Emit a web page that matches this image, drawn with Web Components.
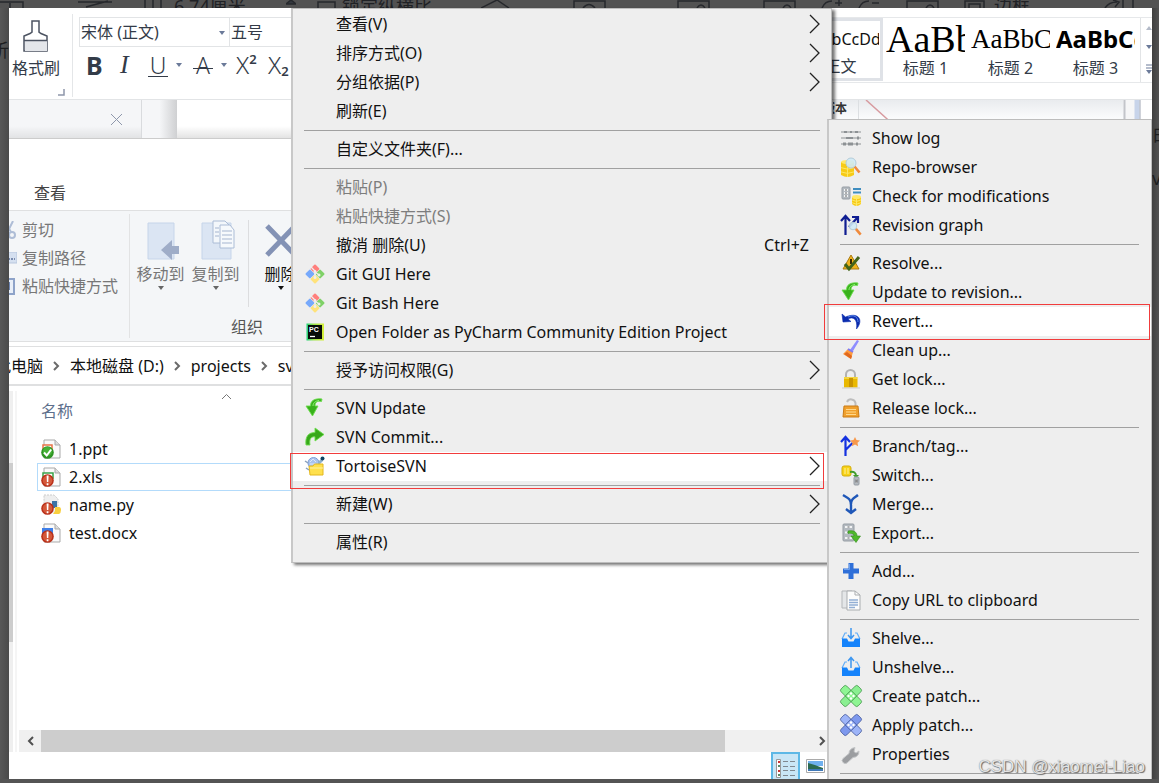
<!DOCTYPE html>
<html lang="zh-CN">
<head>
<meta charset="utf-8">
<title>TortoiseSVN</title>
<style>
html,body{margin:0;height:100%}
body{background:#545454;overflow:hidden;font:16px/20px "Noto Sans","Noto Sans CJK SC",sans-serif;color:#111}
</style>
</head>
<body>
<app-desktop>
  <dim-toolbar slot="top"></dim-toolbar>
  <dim-edge slot="left"><span>析</span></dim-edge>
  <dim-edge slot="right" side="right"><span>白</span><span>ve</span></dim-edge>
  <word-ribbon></word-ribbon>
  <doc-strip></doc-strip>
  <file-explorer>
    <file-row icon="ppt">1.ppt</file-row>
    <file-row icon="xls" selected>2.xls</file-row>
    <file-row icon="py">name.py</file-row>
    <file-row icon="docx">test.docx</file-row>
  </file-explorer>
  <context-menu slot="overlay" class="shell">
    <menu-entry submenu>查看(V)</menu-entry>
    <menu-entry submenu>排序方式(O)</menu-entry>
    <menu-entry submenu>分组依据(P)</menu-entry>
    <menu-entry>刷新(E)</menu-entry>
    <menu-line></menu-line>
    <menu-entry>自定义文件夹(F)...</menu-entry>
    <menu-line></menu-line>
    <menu-entry disabled>粘贴(P)</menu-entry>
    <menu-entry disabled>粘贴快捷方式(S)</menu-entry>
    <menu-entry shortcut="Ctrl+Z">撤消 删除(U)</menu-entry>
    <menu-entry icon="git">Git GUI Here</menu-entry>
    <menu-entry icon="git">Git Bash Here</menu-entry>
    <menu-entry icon="pycharm">Open Folder as PyCharm Community Edition Project</menu-entry>
    <menu-line></menu-line>
    <menu-entry submenu>授予访问权限(G)</menu-entry>
    <menu-line></menu-line>
    <menu-entry icon="update">SVN Update</menu-entry>
    <menu-entry icon="commit">SVN Commit...</menu-entry>
    <menu-entry icon="tortoise" submenu active>TortoiseSVN</menu-entry>
    <menu-line></menu-line>
    <menu-entry submenu>新建(W)</menu-entry>
    <menu-line></menu-line>
    <menu-entry>属性(R)</menu-entry>
  </context-menu>
  <context-menu slot="overlay" class="svn">
    <menu-entry icon="log">Show log</menu-entry>
    <menu-entry icon="repo">Repo-browser</menu-entry>
    <menu-entry icon="check">Check for modifications</menu-entry>
    <menu-entry icon="graph">Revision graph</menu-entry>
    <menu-line></menu-line>
    <menu-entry icon="resolve">Resolve...</menu-entry>
    <menu-entry icon="update">Update to revision...</menu-entry>
    <menu-entry icon="revert" active>Revert...</menu-entry>
    <menu-entry icon="clean">Clean up...</menu-entry>
    <menu-entry icon="lock">Get lock...</menu-entry>
    <menu-entry icon="unlock">Release lock...</menu-entry>
    <menu-line></menu-line>
    <menu-entry icon="branch">Branch/tag...</menu-entry>
    <menu-entry icon="switch">Switch...</menu-entry>
    <menu-entry icon="merge">Merge...</menu-entry>
    <menu-entry icon="export">Export...</menu-entry>
    <menu-line></menu-line>
    <menu-entry icon="add">Add...</menu-entry>
    <menu-entry icon="copy">Copy URL to clipboard</menu-entry>
    <menu-line></menu-line>
    <menu-entry icon="shelve">Shelve...</menu-entry>
    <menu-entry icon="unshelve">Unshelve...</menu-entry>
    <menu-entry icon="patchg">Create patch...</menu-entry>
    <menu-entry icon="patchb">Apply patch...</menu-entry>
    <menu-entry icon="wrench">Properties</menu-entry>
    <menu-line></menu-line>
  </context-menu>
  <water-mark slot="overlay">CSDN @xiaomei-Liao</water-mark>
</app-desktop>

<script>
const patch = (a, b, s) => `<g stroke="${s}" stroke-width=".8"><rect x="6" y="-2" width="8" height="24" rx="2" fill="${a}" transform="rotate(-45 10 10)"/><rect x="6" y="-2" width="8" height="24" rx="2" fill="${b}" fill-opacity=".7" transform="rotate(45 10 10)"/><rect x="6" y="6" width="8" height="8" fill="${a}" transform="rotate(45 10 10)"/></g><g fill="#fff"><circle cx="10" cy="7.500" r="1.200"/><circle cx="10" cy="12.500" r="1.200"/><circle cx="7.500" cy="10" r="1.200"/><circle cx="12.500" cy="10" r="1.200"/></g>`;
const page = inner => `<path d="M3 1h11l5 5v13H3z" fill="#fafafa" stroke="#a9a9a9"/><path d="M14 1v5h5" fill="#ddd" stroke="#a9a9a9"/>${inner}`;
const alertBadge = `<circle cx="6.500" cy="13.500" r="6.300" fill="#b92f18"/><circle cx="6.500" cy="13.500" r="4.800" fill="#d4583a"/><path d="M5.600 8.600h2l-.3 6.400H5.900zM5.700 16.300h1.700v2H5.700z" fill="#fff"/>`;
const disk = (x, y, w, h) => `<path d="M${x} ${y+2}v${h-4}q${w/2} 4 ${w} 0v-${h-4}z" fill="#f7cb16"/><ellipse cx="${x+w/2}" cy="${y+2}" rx="${w/2}" ry="2" fill="#ffe866"/><path d="M${x} ${y+h*.45}q${w/2} 3 ${w} 0M${x} ${y+h*.7}q${w/2} 3 ${w} 0M${x+w*.5} ${y+4}v${h-4}" stroke="#fde766" fill="none"/>`;
const lens = (x, y, r) => `<path d="M${x+r*.7} ${y+r*.7}l5 6" stroke="#f08a3c" stroke-width="2.600"/><circle cx="${x}" cy="${y}" r="${r}" fill="#cfeaf6" fill-opacity=".9" stroke="#b4ccd8"/>`;
const cabinet = (x, y, w, h) => `<rect x="${x}" y="${y}" width="${w}" height="${h}" rx="1" fill="#b4bac0" stroke="#969da4"/><path d="M${x+2} ${y+3}h${w-4}M${x+2} ${y+h/2}h${w-4}M${x+2} ${y+h-3}h${w-4}" stroke="#f2f4f5" stroke-width="2"/><path d="M${x+w/2-1} ${y+3}h2M${x+w/2-1} ${y+h/2}h2M${x+w/2-1} ${y+h-3}h2" stroke="#666"/>`;
const downArrow = `<path d="M17 1C9 0 5.500 3 5.500 8H1l6.500 10L13 8h-3c0-3.500 2-5.500 6.500-4.500z" fill="#38b11b" stroke="#6bdc4c" stroke-width=".9"/><path d="M8 8c0-3 2-5 6-5.500" stroke="#8df070" fill="none"/>`;
const tray = `<path d="M1 11l3-6h2M19 11l-3-6h-2" stroke="#63aef8" fill="none" stroke-width="1.200"/><path d="M1 10.500h5l1.500 3h5l1.500-3h5V19H1z" fill="#1583fb"/>`;
const ICONS = {
  git:`<g transform="rotate(45 10 10)"><rect x="3" y="3" width="6.800" height="6.800" rx="1" fill="#ff7f7c"/><rect x="10.200" y="3" width="6.800" height="6.800" rx="1" fill="#7fd167"/><rect x="3" y="10.200" width="6.800" height="6.800" rx="1" fill="#77a9fb"/><rect x="10.200" y="10.200" width="6.800" height="6.800" rx="1" fill="#ffe27a"/></g><path d="M6 3l4 4v7M10 8l4 3" stroke="#eee" stroke-width="1.300" fill="none"/><circle cx="10" cy="7.500" r="1.500" fill="#eee"/><circle cx="10" cy="13.500" r="1.500" fill="#eee"/><circle cx="14" cy="11" r="1.500" fill="#eee"/>`,
  pycharm:`<defs><linearGradient id="p"><stop stop-color="#1fd17c"/><stop offset=".4" stop-color="#9be04a"/><stop offset="1" stop-color="#d8f03c"/></linearGradient></defs><rect x="1.500" y="1.500" width="17.500" height="17" fill="url(#p)"/><rect x="3" y="3" width="14" height="14" fill="#070b08"/><text x="4" y="9.500" font-family="Liberation Sans" font-weight="700" font-size="7" fill="#fff">PC</text><path d="M5 14.500h5" stroke="#fff" stroke-width="1.300"/>`,
  update:downArrow,
  commit:`<path d="M1 18C0 10 3 5.500 10 5.500V1l9 6.500-9 6.500v-4.200C6 9.500 4 12 5 18z" fill="#38a81b" stroke="#6bdc4c" stroke-width=".9"/>`,
  tortoise:`<circle cx="8.500" cy="7" r="5.500" fill="#a9c3ef" stroke="#7f9fd6"/><path d="M5 6l3-3 3 3M5 8h6" stroke="#dbe7fb" fill="none"/><path d="M13 6l4-4 1 3-4 4z" fill="#8fb2cc"/><circle cx="17.500" cy="2.500" r="2" fill="#0f4361"/><path d="M0 5l3 2M1 12l3 2" stroke="#8aa0bc" stroke-width="1.500"/><path d="M4 10h4l1.500-2h8.500v11H5z" fill="#ffe04d" stroke="#e3b81f"/><path d="M5 12h13" stroke="#fff2a6"/>`,
  log:`<g fill="#8d9194"><path d="M0 3.500h20v1H0zM0 9.500h20v1H0zM0 15.500h20v1H0z"/><rect x="3" y="3" width="3" height="2"/><rect x="9" y="3" width="2" height="2"/><rect x="14" y="3" width="3" height="2"/><rect x="5" y="9" width="7" height="2"/><rect x="16" y="8.500" width="2" height="3"/><rect x="2" y="14.500" width="3" height="3"/><rect x="7" y="14.500" width="5" height="3"/><rect x="15" y="14.500" width="2" height="3"/></g>`,
  repo:disk(0,3,13,17)+lens(10,6,5),
  check:cabinet(1,1,8,12)+`<path d="M12 3h8M12 6.500h8" stroke="#3f8dbf" stroke-width="2"/>`+disk(11,9,9,11),
  graph:`<path d="M4.500 20V2M0 6l4.500-5L9 6M8 12L16 3M11 2h6v6" stroke="#0f1d92" stroke-width="2.200" fill="none"/>`+lens(12,11,3.800),
  resolve:`<path d="M10 2l8 14H2z" fill="#f0b31c" stroke="#a97a13"/><path d="M10 6v5" stroke="#3a2a05" stroke-width="2"/><path d="M4 11l4 5 10-12" stroke="#42641a" stroke-width="3" fill="none"/>`,
  revert:`<path d="M1 3l1 8 8-.5-3-2.500C12 5 17 8 15.500 18c7.500-9 2-17.500-11-12z" fill="#0a2cae" stroke="#0a2cae" stroke-width=".6"/><path d="M7 6c6-3 10 0 10 5" stroke="#5c8df0" fill="none"/>`,
  clean:`<path d="M16 0l2 1-6 10-3-1z" fill="#8f8dff"/><path d="M7 9l5 3-2 7-8-5z" fill="#ff9a3c"/><path d="M3 14l7 5 1-3-5-4z" fill="#e0681f"/><path d="M7 9l5 3" stroke="#7d7af5" stroke-width="2"/>`,
  lock:`<path d="M5 9V5.500a4.500 4.500 0 0 1 9 0V9" fill="none" stroke="#b2b2b2" stroke-width="2"/><rect x="3" y="8" width="13.500" height="10.500" fill="#e9b800"/><path d="M3 9h13.500" stroke="#fff07a"/><path d="M8 9h4v9H8z" fill="#c99400"/><path d="M1 19h18" stroke="#ccc"/>`,
  unlock:`<path d="M6 4a4.500 4.500 0 0 1 8.500 1V9" fill="none" stroke="#bdbdbd" stroke-width="2"/><path d="M3 8h14l1 11H2z" fill="#f0a02c" stroke="#c97b16"/><path d="M5 11.500h10M5 14h10M5 16.500h10" stroke="#ffd98c" stroke-width="1.200"/>`,
  branch:`<path d="M4.500 20V2M0 6l4.500-5L9 6M4.500 14l7-7" stroke="#1431e0" stroke-width="2.200" fill="none"/><path d="M14 1l1.500 3 3.500.5-2.500 2.300.6 3.500L14 8.600l-3.100 1.700.6-3.500L9 4.500l3.500-.5z" fill="#f7984a"/>`,
  switch:`<rect x="1" y="1" width="9" height="10" rx="2" fill="#f8d216" stroke="#d3ad0d"/><path d="M4 3v6M7 3v6" stroke="#fff29a"/><path d="M9 7q6-1 6 4" stroke="#3f9c2a" stroke-width="2" fill="none"/><path d="M12 10h6l-3 3.500z" fill="#3f9c2a"/>`+cabinet(13,12,5,8),
  merge:`<path d="M2 1c5 3 8 4 8 10V18M17 1c-4 3-7 4-7 9M5 15l5 4 5-4" stroke="#1f57b8" stroke-width="2.400" fill="none"/>`,
  export:cabinet(2,1,11,17)+`<path d="M7 8c6-1 9 1 9 5h3.500L15 19.500 10 13h3c0-2-2-3-6-2.500z" fill="#4fb82c" stroke="#2f8a17" stroke-width=".6"/>`,
  add:`<path d="M7.500 2h5v5.500H18v5h-5.500V18h-5v-5.500H2v-5h5.500z" fill="#2f6fd8"/><path d="M8.500 3v5.500H3" stroke="#6ea2ef" fill="none"/>`,
  copy:`<path d="M1 1h10v17H1z" fill="#e4e6e8" stroke="#b4b7ba"/><path d="M6 1h8l5 4v15H6z" fill="#fcfcfc" stroke="#aaadb0"/><path d="M14 1v4h5" fill="none" stroke="#aaadb0"/><path d="M8 10h9M8 12.500h9M8 15h9M8 17.500h6" stroke="#92aed4" stroke-width="1.400"/>`,
  shelve:tray+`<path d="M10 0v10M7 7l3 3.500L13 7" stroke="#3e97f0" fill="none" stroke-width="1.500"/>`,
  unshelve:tray+`<path d="M10 11V1M7 4l3-3.500L13 4" stroke="#3e97f0" fill="none" stroke-width="1.500"/>`,
  patchg:patch('#8ef593','#5ff06a','#4a9a52'),
  patchb:patch('#9db4f8','#4d74ec','#4a5f9e'),
  wrench:`<path d="M2 18.500q-2-2 0-4l6-5q0-5 6-6l-1 4 2 1.500 3-2q0 6-6 6.500l-6 5.500q-2 1.500-4-.5z" fill="#9b9da0" stroke="#c4c6c8"/>`,
  ppt:page('<path d="M2 6h9v5H2z" fill="#fff" stroke="#e87346" stroke-width="1.500"/>')+`<circle cx="6.500" cy="13.500" r="6.300" fill="#2f9423"/><circle cx="6.500" cy="12.500" r="4.600" fill="#46b236"/><path d="M3 13.500l2.700 3 4.500-6" stroke="#fff" stroke-width="2" fill="none"/>`,
  xls:page('<path d="M2 6h10v5H2z" fill="#fff" stroke="#3aa34a" stroke-width="1.500"/>')+alertBadge,
  py:`<path d="M3 0h10l4 4v13H3z" fill="#eee" stroke="#ccc" stroke-dasharray="2 1"/><path d="M11 6h5v7h-5z" fill="#3a73a6"/><path d="M14 12h4q2 0 2 3t-2 4h-6l2-3z" fill="#f9cf3e"/>`+alertBadge,
  docx:page('<path d="M1 5h11v6H1z" fill="#3f7fe8"/>')+alertBadge
};
const svg = n => n && ICONS[n] ? `<svg viewBox="0 0 20 20" width="20" height="20" aria-hidden="true">${ICONS[n]}</svg>` : '';
const CARET = c => `<svg width="6" height="4" aria-hidden="true"><path d="M0 0h6L3 4z" fill="${c}"/></svg>`;

function element(name, render) {
  customElements.define(name, class extends HTMLElement {
    constructor() { super(); this.attachShadow({mode:'open'}); }
    connectedCallback() { this.shadowRoot.innerHTML = render(this); }
  });
}

element('app-desktop', () => `<style>
:host{display:grid;grid-template:8px 1fr 4px / 9px 1fr 7px;height:100vh;position:relative;overflow:hidden;background:#545454}
slot[name=top]::slotted(*){grid-area:1/1/2/4}
slot[name=left]::slotted(*){grid-area:2/1}
slot[name=right]::slotted(*){grid-area:2/3}
main{grid-area:2/2;display:flex;flex-direction:column;background:#fff;min-height:0;min-width:0;overflow:hidden}
slot[name=overlay]::slotted(*){position:absolute}
</style><slot name="top"></slot><slot name="left"></slot><main><slot></slot></main><slot name="right"></slot><slot name="overlay"></slot>`);

const glyph = (w, d) => `<svg width="${w}" height="8" fill="none" stroke="#26282c" stroke-width="1.500">${d}</svg>`;
const PICTURE = glyph(33, '<path d="M1 8V1h31v7M20 8q4-6 8 0"/>');
element('dim-toolbar', () => `<style>
:host{display:flex;height:8px;overflow:hidden;background:#525252;color:#1f2125}
div{display:flex}
svg{flex:none;display:block}
span{height:8px;font-size:18px;line-height:12px;white-space:nowrap}
.shape{gap:32px;width:174px}.shape svg:nth-child(2){margin-left:22px}
.size{gap:40px;width:143px}
.lock{gap:5px;width:164px}
.pics{width:483px;display:grid;grid-template-columns:92px 104px 86px 58px 37px 48px 58px}
.frame{gap:9px;flex:1}.frame svg:last-child{margin-left:64px}
</style>
<div class="shape">${glyph(24,'<path d="M0 2h23v6M10 3v5"/>')}${glyph(34,'<path d="M0 2h34M8 7L30 1"/>')}${glyph(20,'<path d="M1 0v8M9 0v8M17 0v8"/>')}</div>
<div class="size"><span>6.74厘米</span>${glyph(10,'<path d="M0 4L5 0l5 4z" fill="#34383f"/>')}</div>
<div class="lock">${glyph(20,'<path d="M1 8V2h17v6"/>')}<span>锁定纵横比</span></div>
<div class="pics">${glyph(32,'<path d="M0 8L16 0l12 8"/>')}${glyph(33,'<path d="M1 8V1h31v7M10 8q6-7 12 0"/>')}${PICTURE}${PICTURE}${glyph(22,'<path d="M1 8q3-7 10-7M14 3h7M18 0v6"/>')}${glyph(22,'<path d="M1 8q3-7 10-7M14 3h7"/>')}${PICTURE}</div>
<div class="frame">${glyph(21,'<path d="M1 8V1h19v7M5 8V4h11v4"/>')}<span>边框</span>${glyph(50,'<path d="M2 8Q6 2 14 2M10 0l6 2-4 5M20 0v8M30 0v8"/>')}</div>`);

element('dim-edge', el => `<style>
:host{display:flex;flex-direction:column;align-items:flex-end;min-width:0;min-height:0;overflow:hidden;color:#1d1e20;font-size:18px;gap:24px;
background:linear-gradient(90deg,#585858,#4a4a4a);padding-top:32px}
:host([side]){align-items:flex-start;background:linear-gradient(90deg,#404040,#525252);padding-top:116px}
::slotted(span){line-height:20px;white-space:nowrap}
</style><slot></slot>`);

element('word-ribbon', () => `<style>
:host{display:flex;flex:none;height:92px;background:#fff;border-bottom:1px solid #e2e4e6;box-sizing:border-box;overflow:hidden;color:#333b48}
button{font:inherit;color:inherit;background:none;border:0;padding:0;margin:0}
.paint{flex:none;width:63px;margin:6px 0 2px;border-right:1px solid #e4e6e8;display:flex;flex-direction:column;align-items:center}
.paint button{display:flex;flex-direction:column;align-items:center;gap:3px;padding:6px 9px 0 0;line-height:24px}
.paint .corner{align-self:flex-end;margin:9px 7px 0}
.font{flex:none;width:300px;padding:9px 0 0 6px}
.boxes{display:flex;border:1px solid #e2e4e6;height:28px}
select{appearance:none;border:0;border-right:1px solid #e2e4e6;background:none;font:inherit;color:inherit;padding:0 1px;width:150px;outline:0}
.sel{position:relative;display:flex}.sel svg{position:absolute;right:5px;top:13px}
.marks{display:flex;align-items:center;height:36px;padding-left:7px;line-height:26px}
.marks button{height:26px;text-align:left;display:flex;align-items:center}
.marks svg{margin-left:8px}
.marks .b{width:34px;font:700 25px/26px "Noto Sans"}
.marks .i{width:28px;font:italic 26px/26px "Liberation Serif"}
.u{width:45px}.u span,.s span{font:300 23px/22px "Noto Sans";width:20px;text-align:center;border-bottom:1px solid;display:block}
.s{width:43px}.s span{border:0;background:linear-gradient(#333b48,#333b48) 0 14px/20px 1px no-repeat}
.marks .x{width:32px;font-size:24px;font-weight:300}.x small{font-size:13px;line-height:14px;font-weight:600}
.x .sup{align-self:flex-start}.x .sub{align-self:flex-end}
.gallery{flex:none;margin:9px 0 16px auto;display:flex;border:solid #e6e8ea;border-width:1px 0}
.style{width:85px;box-sizing:border-box;display:flex;flex-direction:column;align-items:center;overflow:hidden;padding:0 3px}
.style b{font-weight:400;height:38px;white-space:nowrap;color:#000;display:block;overflow:hidden;width:100%}
.style span{line-height:24px}
.style:first-child{border:3px solid #dfe2e7;height:63px;padding:0 1px}.style:first-child b{font-size:16px;height:35px;line-height:36px;color:#111}
.h1 b{font:38px/42px "Liberation Serif"}.h2 b{font:27px/42px "Liberation Serif"}.h3 b{font:700 24px/42px "Noto Sans"}
.scroll{width:12px;box-sizing:border-box;border-left:1px solid #e2e4e6;margin-left:2px;display:flex;flex-direction:column;justify-content:space-around;align-items:flex-end}
</style>
<div class="paint"><button><svg width="26" height="33" fill="none" stroke="#4c5361" stroke-width="1.500"><path d="M9 1h7v11l2 1.500 6 2.500v15H1V16l6-2.500L9 12z"/><path d="M2 21h22v10H2z" fill="#e4e6ea" stroke="none"/><path d="M1 20.500h23"/></svg>格式刷</button><svg class="corner" width="7" height="7"><path d="M6 0v6H0" fill="none" stroke="#8e97ab" stroke-width="1.500"/></svg></div>
<div class="font"><div class="boxes"><label class="sel"><select aria-label="字体"><option>宋体 (正文)</option></select>${CARET('#6b7a99')}</label><select aria-label="字号"><option>五号</option></select></div>
<div class="marks"><button class="b">B</button><button class="i">I</button><button class="u"><span>U</span>${CARET('#6b7a99')}</button><button class="s"><span>A</span>${CARET('#6b7a99')}</button><button class="x">X<small class="sup">2</small></button><button class="x">X<small class="sub">2</small></button></div></div>
<div class="gallery"><div class="style"><b>AaBbCcDd</b><span>正文</span></div><div class="style h1"><b>AaBb</b><span>标题 1</span></div><div class="style h2"><b>AaBbC</b><span>标题 2</span></div><div class="style h3"><b>AaBbCc</b><span>标题 3</span></div>
<div class="scroll"><svg width="6" height="4"><path d="M0 4h6L3 0z" fill="#b3bac8"/></svg>${CARET('#6b7a99')}<svg width="6" height="10"><path d="M0 1h6M0 4h6" stroke="#6b7a99"/><path d="M0 6h6L3 10z" fill="#6b7a99"/></svg></div></div>`);

element('doc-strip', () => `<style>
:host{display:flex;flex:none;height:38px;background:linear-gradient(transparent 26px,#0000001c),#fff;overflow:hidden}
.tab{width:133px;box-sizing:border-box;background:linear-gradient(transparent 26px,#00000014),#f5f6f8;border-right:1px solid #d9dbde;display:flex;align-items:center;justify-content:flex-end;padding-right:18px}
.gut{width:35px;background:linear-gradient(90deg,#f5f6f8 50%,#cfd0d2)}
.cell{margin-left:auto;width:319px;display:flex;background:linear-gradient(#e9ebee,#fafbfc 18px);font:700 12px/16px "Noto Sans CJK SC";color:#333;justify-content:space-between;overflow:hidden}
.cell span{margin-left:-10px}
</style><div class="tab"><svg width="13" height="13"><path d="M1 1l11 11M12 1L1 12" stroke="#8e97ab"/></svg></div><div class="gut"></div>
<div class="cell"><span>版本</span><svg width="294" height="38"><path d="M.5 0v38" stroke="#dcdfe2"/><path d="M8 0l30 27" stroke="#d79a9f" stroke-width="1.500"/><path d="M265 0h29v38h-29z" fill="#f6f6f7"/><path d="M266.500 0v38" stroke="#c3c5ca" stroke-width="2"/><path d="M279 0v38" stroke="#c8d4ea" stroke-width="5"/><path d="M282 0v38" stroke="#a8aebb"/><path d="M283 0h11v38h-11z" fill="#fff"/></svg></div>`);

element('file-row', el => `<style>
:host{display:flex;align-items:center;gap:8px;height:28px;box-sizing:border-box;padding-left:3px;border:1px solid transparent;line-height:26px}
:host([selected]){border-color:#b3dbfb}
svg{flex:none;overflow:visible}
</style>${svg(el.getAttribute('icon'))}<slot></slot>`);

const CHEV = `<svg width="7" height="10" aria-hidden="true"><path d="M1 1l4 4-4 4" fill="none" stroke="#6a6a6a" stroke-width="2"/></svg>`;
element('file-explorer', () => `<style>
:host{display:flex;flex-direction:column;flex:1;min-height:0;width:calc(100% - 322px);background:#fff;border-top:1px solid #ccc;box-sizing:border-box}
button{font:inherit;color:inherit;background:none;border:0;padding:0;margin:0}
.tabs{height:71px;flex:none;box-sizing:border-box;padding:42px 0 0 25px;color:#444;line-height:24px}
.ribbon{height:132px;flex:none;box-sizing:border-box;background:#f4f6f8;border:solid #dfe0e1;border-width:1px 0;display:flex;color:#777}
.clip{width:121px;box-sizing:border-box;margin:3px 0;border-right:1px solid #e2e3e4;padding-top:2px;overflow:hidden}
.clip button{display:flex;align-items:center;height:28px;gap:5px;margin-left:-8px;white-space:nowrap}
.org{display:flex;flex-direction:column;width:234px;align-items:center}
.tools{display:flex;height:104px;width:100%;box-sizing:border-box;padding-top:9px}
.tools button{display:flex;flex-direction:column;align-items:center;width:55px;line-height:24px;white-space:nowrap}
.tools button svg:first-child{height:42px}
.tools .big{margin-left:3px}
.tools .sep{width:1px;background:#dcdddf;margin:0 0 8px 5px}
.tools .del{color:#111;margin-left:4px}
.label{line-height:24px;color:#555}
nav{height:40px;margin-top:4px;flex:none;box-sizing:border-box;border:solid #dfe0e1;border-width:1px 0 2px;display:flex;align-items:center;gap:8px;overflow:hidden;white-space:nowrap}
nav a{color:#111;text-decoration:none;flex:none}nav a:first-child{margin-left:-14px}nav svg{flex:none;margin:0 2px}
.body{flex:1;display:flex;min-height:0;margin-top:5px}
.tree{width:8px;flex:none;box-sizing:border-box;border-right:2px solid #f5f5f5;display:flex}
.tree i{width:4px;background:linear-gradient(#efefef 72px,#cdcdcd 72px 251px,#efefef 251px)}
.list{flex:1;min-width:0;display:flex;flex-direction:column}
.head{display:flex;align-items:center;height:40px;padding-left:24px;color:#5d6f8c}
.head svg{margin:0 0 30px 148px}
.rows{padding:4px 0 0 20px;flex:1}
.bar{height:22px;display:flex;background:#f0f0f0;margin-left:2px}
.bar button{width:22px;display:grid;place-items:center}
.bar span{flex:1;display:flex}.bar span i{width:88%;background:#cdcdcd}
.bar button:last-child{width:12px;place-items:center start}
.views{height:27px;flex:none;display:flex;justify-content:flex-end;align-items:stretch;gap:6px;padding-right:5px}
.views button{width:29px;display:grid;place-items:center;padding-top:4px}
.views button:first-child{background:#c9e6f6;border:2px solid #5db8e6;border-bottom:0}
.views button:last-child{width:19px;padding:0}
</style>
<div class="tabs"><button>查看</button></div>
<div class="ribbon"><div class="clip">
<button><svg width="16" height="18" fill="none" stroke="#aebdd6" stroke-width="2"><path d="M12 0L6 12M4 1l6 10"/><circle cx="11" cy="14" r="3"/></svg>剪切</button>
<button><svg width="16" height="12"><path d="M0 0h16v11H0z" fill="#d5e0f0" stroke="#b7c6dd"/><path d="M7 7h2M10 7h2M13 7h1" stroke="#7a8caf" stroke-width="2"/></svg>复制路径</button>
<button><svg width="16" height="18"><path d="M2 2h11v15H2z" fill="#e9eff8" stroke="#8ea3c9" stroke-width="2"/><path d="M8 5v8" stroke="#6f86b2" stroke-width="2"/></svg>粘贴快捷方式</button></div>
<div class="org"><div class="tools">
<button class="big"><svg width="36" height="42" viewBox="0 0 36 42"><path d="M5 3h26v36H5z" fill="#dbe5f3" stroke="#c6d5ea"/><path d="M18 30l11-10v6h10v8H29v6z" fill="#9fadc8"/></svg>移动到${CARET('#666')}</button>
<button><svg width="38" height="42" viewBox="0 0 38 42"><path d="M5 3h29v36H5z" fill="#dbe5f3" stroke="#c6d5ea"/><path d="M16 1h12l5 5v17H16z" fill="#f3f7fb" stroke="#abbcd6"/><path d="M23 5h10l4 5v18H23z" fill="#f6f9fc" stroke="#abbcd6"/><path d="M25 11h10M25 15h10M25 19h10M25 23h10M18 8h4M18 12h4M18 16h4" stroke="#a5b5d0"/></svg>复制到${CARET('#666')}</button><i class="sep"></i>
<button class="del"><svg width="34" height="42"><path d="M3 6l28 29M31 6L3 35" stroke="#8392b5" stroke-width="5"/></svg>删除${CARET('#111')}</button></div><span class="label">组织</span></div></div>
<nav aria-label="路径"><a href="#">此电脑</a>${CHEV}<a href="#">本地磁盘 (D:)</a>${CHEV}<a href="#">projects</a>${CHEV}<a href="#">svn</a></nav>
<div class="body"><div class="tree"><i></i></div><div class="list">
<div class="head"><span>名称</span><svg width="11" height="7"><path d="M1 6l4.500-4.500L10 6" fill="none" stroke="#777"/></svg></div>
<div class="rows"><slot></slot></div>
<div class="bar"><button aria-label="向左"><svg width="9" height="10"><path d="M7 1L3 5l4 4" fill="none" stroke="#505050" stroke-width="2"/></svg></button><span><i></i></span><button aria-label="向右"><svg width="9" height="10"><path d="M2 1l4 4-4 4" fill="none" stroke="#505050" stroke-width="2"/></svg></button></div></div></div>
<div class="views"><button aria-label="详细信息"><svg width="20" height="19"><path d="M.5.500h4v18h-4z" fill="#fff" stroke="#999"/><path d="M7 2.500h5M14 2.500h5M7 7.500h5M14 7.500h5M7 11.500h5M14 11.500h5M7 16.500h5M14 16.500h5" stroke="#808890"/><path d="M2 3h2M2 12h2" stroke="#c33" stroke-width="2"/><path d="M2 7h2M2 16h2" stroke="#5a8a6a" stroke-width="2"/></svg></button><button aria-label="缩略图"><svg width="19" height="14"><path d="M.5.500h18v13H.5z" fill="#fff" stroke="#aaa"/><path d="M2 2h15v5H2z" fill="#6fb0ee"/><path d="M2 4q8 2 15 5v3H2z" fill="#2c6a50"/><path d="M2 10h15v2H2z" fill="#3f78b8"/></svg></button></div>`);

element('context-menu', () => `<style>
:host{display:block;box-sizing:border-box;background:#eee;border:1px solid #bdbdbd;border-left:2px solid #c8c8c8}
:host(.shell){left:291px;top:8px;width:541px;height:555px;padding-top:1px;--line-right:11px;--ring:1px 7px -8px -3px;box-shadow:3px 2px 3px #0000008c}
:host(.svn){right:7px;top:119px;bottom:4px;width:325px;padding-top:4px;border-bottom:0;--line-right:12px;--ring:-3px 1px -4px -5px;clip-path:inset(0 0 0 -8px)}
</style><div role="menu"><slot></slot></div>`);

element('menu-line', () => `<style>:host{display:flex;align-items:center;height:9px;padding:0 var(--line-right) 0 11px}
hr{flex:1;margin:0;border:0;border-top:1px solid #a0a0a0}</style><hr>`);

element('menu-entry', el => `<style>
:host{display:block;position:relative;height:29px}
button{width:100%;height:29px;box-sizing:border-box;display:grid;grid-template-columns:20px 1fr auto;column-gap:11px;align-items:center;padding:0 var(--line-right) 2px 12px;border:0;margin:0;background:none;font:inherit;color:#111;text-align:left;white-space:nowrap}
button:disabled{color:#7d7d7d}
:host([active]) button{background:#fff}
svg{display:block;overflow:visible}
.key{padding-right:11px}
.ring{position:absolute;inset:var(--ring);border:1px solid #f13c3c;pointer-events:none;z-index:2}
</style><button role="menuitem" ${el.hasAttribute('disabled') ? 'disabled' : ''}><span>${svg(el.getAttribute('icon'))}</span><span><slot></slot></span>${el.hasAttribute('shortcut') ? `<span class="key">${el.getAttribute('shortcut')}</span>` : ''}${el.hasAttribute('submenu') ? '<svg width="10" height="18"><path d="M0 0l9 9-9 9" fill="none" stroke="#222" stroke-width="1.300"/></svg>' : ''}</button>${el.hasAttribute('active') ? '<div class="ring"></div>' : ''}`);

element('water-mark', () => `<style>
:host{display:block;right:14px;bottom:5px;font:17px/22px "Liberation Sans",sans-serif;color:#e4e4e4;text-shadow:1px 1px 1px #666,0 0 1px #777;white-space:nowrap}
</style><slot></slot>`);
</script>
</body>
</html>
